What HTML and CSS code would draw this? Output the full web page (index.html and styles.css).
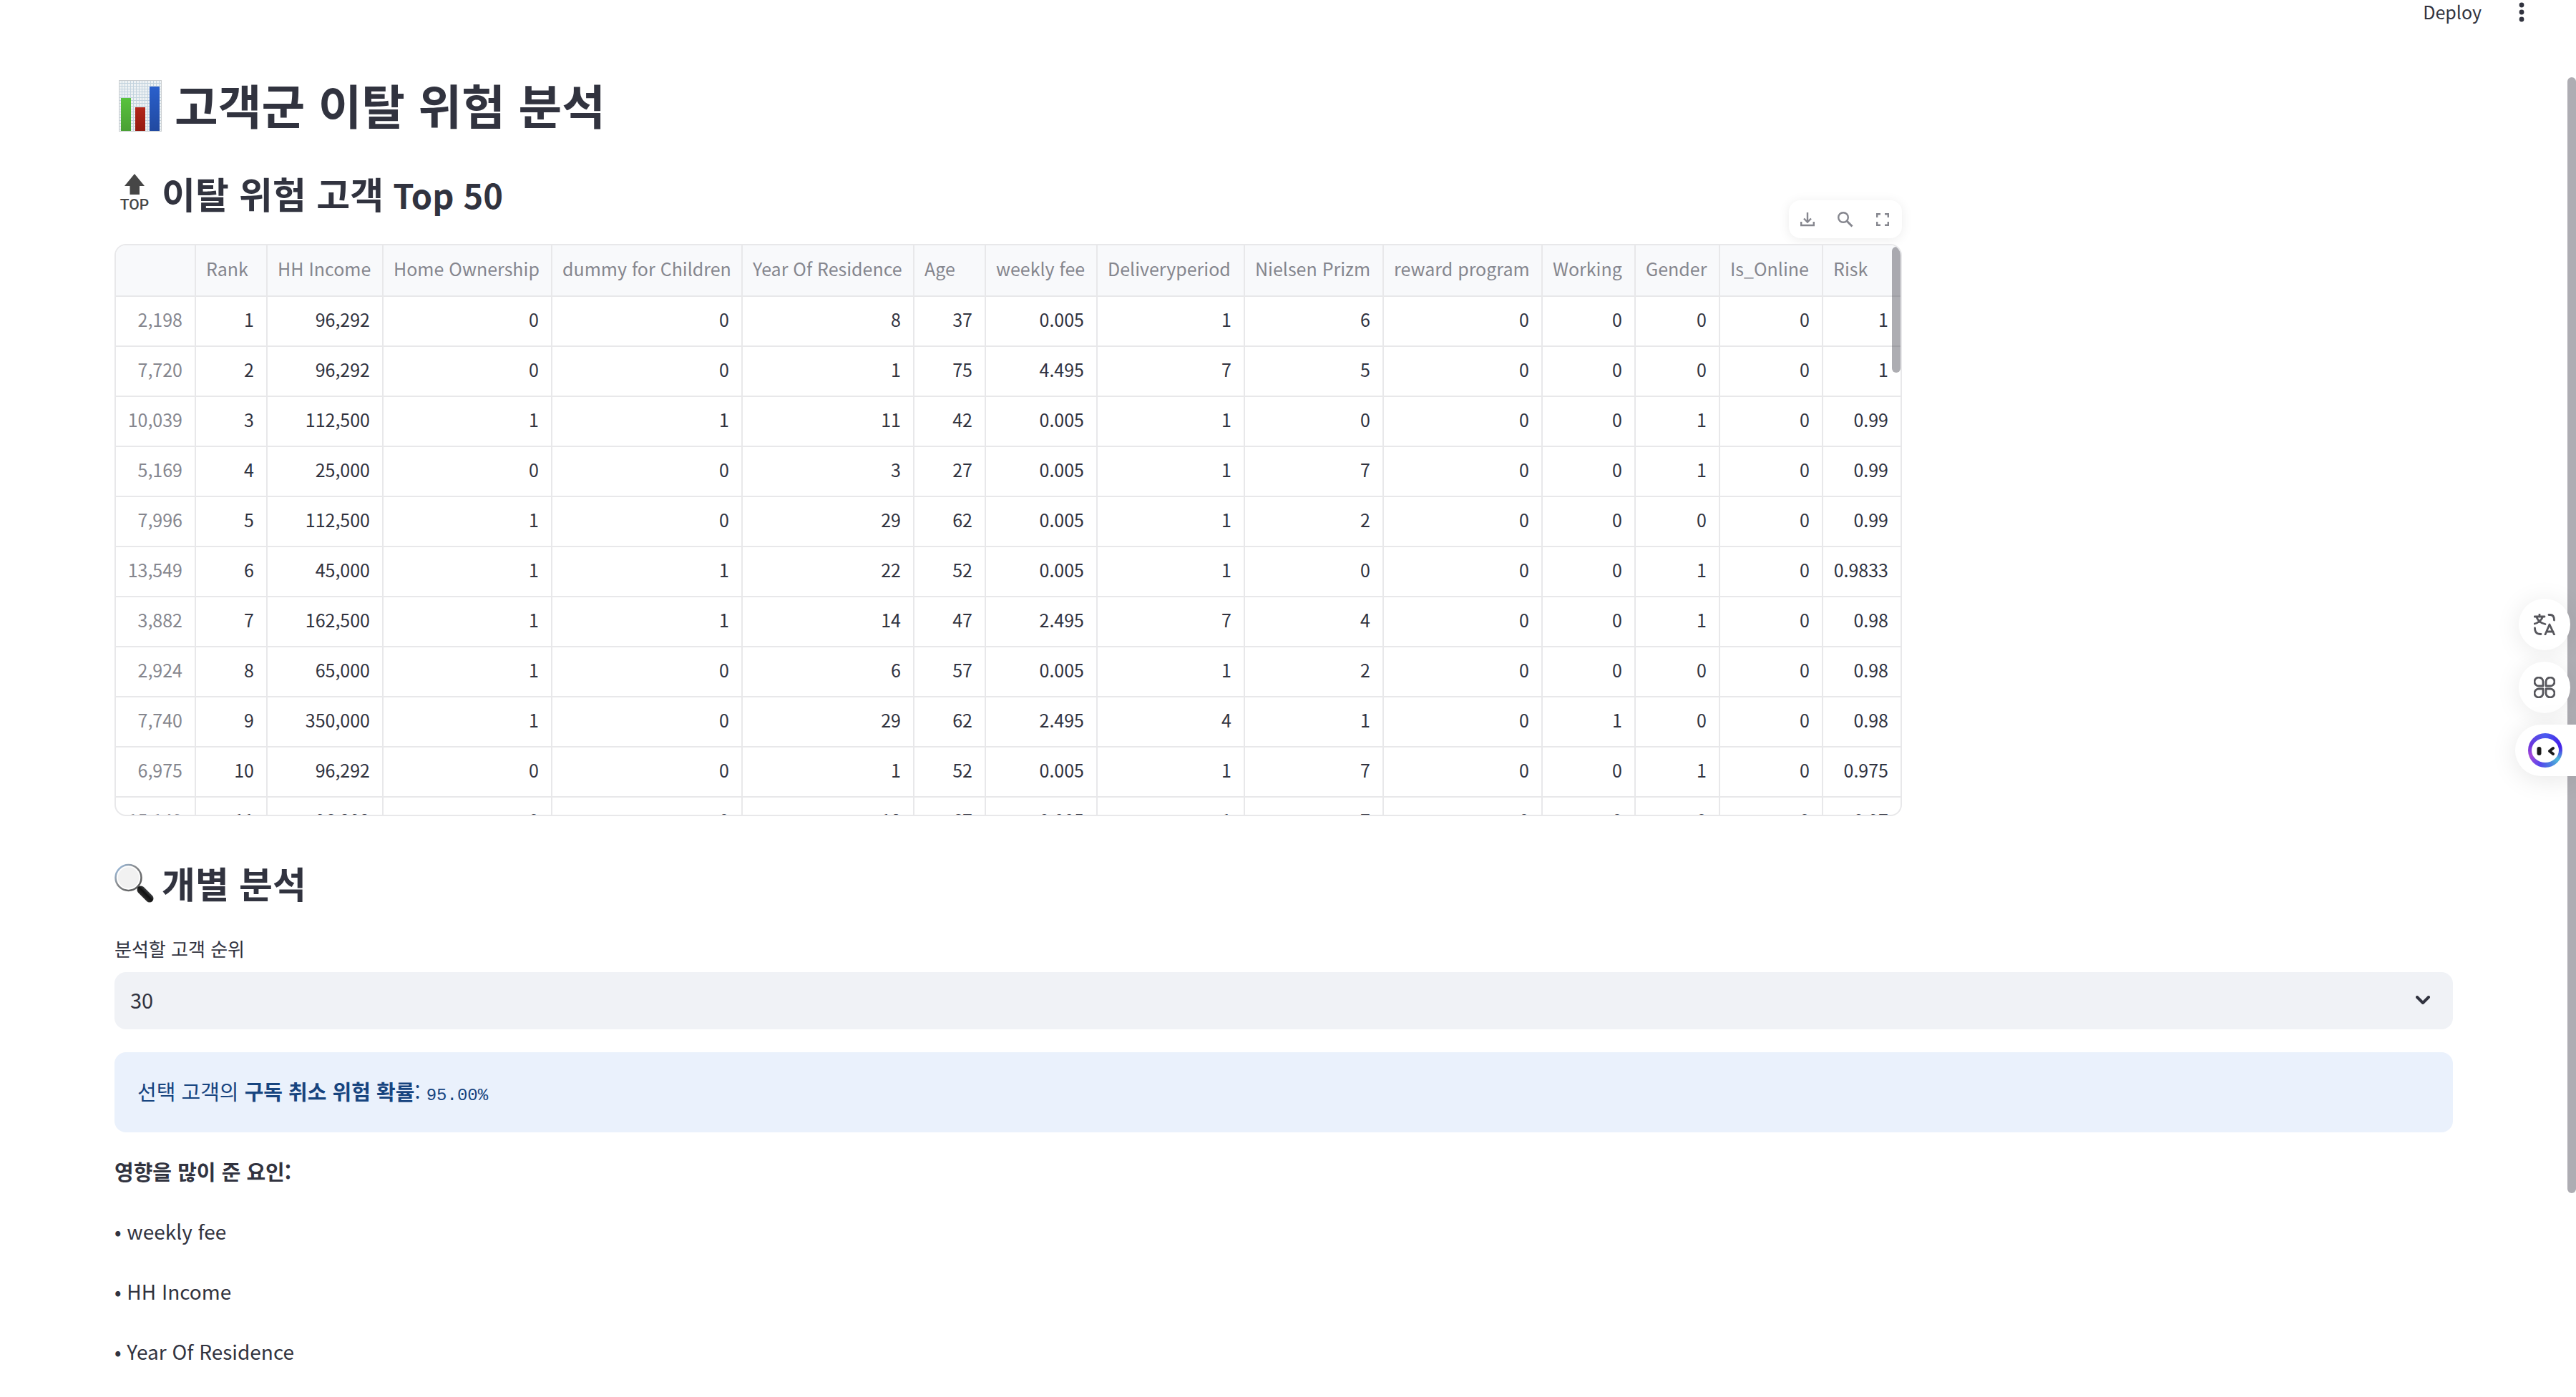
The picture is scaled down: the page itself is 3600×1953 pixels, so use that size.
FILE: index.html
```html
<!DOCTYPE html>
<html lang="ko">
<head>
<meta charset="utf-8">
<title>고객군 이탈 위험 분석</title>
<link rel="stylesheet" href="styles.css">
</head>
<body>
<header class="topbar">
  <button class="deploy" type="button">Deploy</button>
  <button class="more" type="button" aria-label="메뉴">
    <svg width="8" height="28" viewBox="0 0 8 28"><circle cx="4" cy="4" r="3.4"/><circle cx="4" cy="14" r="3.4"/><circle cx="4" cy="24" r="3.4"/></svg>
  </button>
</header>

<main class="page">
  <h1 class="title">
    <svg class="title-icon" viewBox="0 0 60 72" aria-hidden="true">
      <defs>
        <pattern id="grid" width="4" height="4" patternUnits="userSpaceOnUse"><rect width="4" height="4" fill="#eef2f4"/><path d="M0 .5H4M.5 0V4" stroke="#c3d3de" stroke-width="1"/></pattern>
        <linearGradient id="g1" x1="0" y1="0" x2="0" y2="1"><stop offset="0" stop-color="#58c23c"/><stop offset="1" stop-color="#4aa035"/></linearGradient>
        <linearGradient id="g2" x1="0" y1="0" x2="0" y2="1"><stop offset="0" stop-color="#b3261a"/><stop offset="1" stop-color="#941a10"/></linearGradient>
        <linearGradient id="g3" x1="0" y1="0" x2="0" y2="1"><stop offset="0" stop-color="#2a60cc"/><stop offset="1" stop-color="#2149a0"/></linearGradient>
      </defs>
      <rect width="60" height="72" fill="url(#grid)"/>
      <rect x=".5" y=".5" width="59" height="71" fill="none" stroke="#c9cdd0"/>
      <rect x="3" y="25" width="14" height="46" fill="url(#g1)"/>
      <rect x="23" y="38" width="14" height="33" fill="url(#g2)"/>
      <rect x="43" y="9" width="14" height="62" fill="url(#g3)"/>
    </svg>
    <span class="title-text">고객군 이탈 위험 분석</span>
  </h1>

  <h2 class="subtitle">
    <span class="top-icon" aria-hidden="true"><svg width="28" height="29" viewBox="0 0 28 29"><path d="M14 0 28 17H21V29H7.500V17H0Z" fill="#464646"/></svg><span class="top-word">TOP</span></span>
    <span>이탈 위험 고객<span class="subtitle-latin"> Top 50</span></span>
  </h2>

  <section class="frame">
    <div class="tools">
      <button type="button" aria-label="다운로드"><svg width="20" height="20" viewBox="0 0 20 20"><path d="M10 0V13M5 8.500 10 13.500 15 8.500M1.200 13V18H18.800V13"/></svg></button>
      <button type="button" aria-label="검색"><svg width="22" height="22" viewBox="0 0 22 22"><circle cx="8" cy="8" r="6.800"/><path d="M13 13 20.500 20.500" stroke-width="3"/></svg></button>
      <button type="button" aria-label="전체 화면"><svg width="18" height="18" viewBox="0 0 18 18"><path d="M1.200 6V1.200H6M12 1.200H16.800V6M16.800 12V16.800H12M6 16.800H1.200V12"/></svg></button>
    </div>
    <div class="grid-box">
      <table class="grid">
        <colgroup><col class="c0"><col class="c1"><col class="c2"><col class="c3"><col class="c4"><col class="c5"><col class="c6"><col class="c7"><col class="c8"><col class="c9"><col class="c10"><col class="c11"><col class="c12"><col class="c13"><col class="c14"></colgroup>
        <thead><tr><th></th><th>Rank</th><th>HH Income</th><th>Home Ownership</th><th>dummy for Children</th><th>Year Of Residence</th><th>Age</th><th>weekly fee</th><th>Deliveryperiod</th><th>Nielsen Prizm</th><th>reward program</th><th>Working</th><th>Gender</th><th>Is_Online</th><th>Risk</th></tr></thead>
        <tbody>
          <tr><td>2,198</td><td>1</td><td>96,292</td><td>0</td><td>0</td><td>8</td><td>37</td><td>0.005</td><td>1</td><td>6</td><td>0</td><td>0</td><td>0</td><td>0</td><td>1</td></tr>
          <tr><td>7,720</td><td>2</td><td>96,292</td><td>0</td><td>0</td><td>1</td><td>75</td><td>4.495</td><td>7</td><td>5</td><td>0</td><td>0</td><td>0</td><td>0</td><td>1</td></tr>
          <tr><td>10,039</td><td>3</td><td>112,500</td><td>1</td><td>1</td><td>11</td><td>42</td><td>0.005</td><td>1</td><td>0</td><td>0</td><td>0</td><td>1</td><td>0</td><td>0.99</td></tr>
          <tr><td>5,169</td><td>4</td><td>25,000</td><td>0</td><td>0</td><td>3</td><td>27</td><td>0.005</td><td>1</td><td>7</td><td>0</td><td>0</td><td>1</td><td>0</td><td>0.99</td></tr>
          <tr><td>7,996</td><td>5</td><td>112,500</td><td>1</td><td>0</td><td>29</td><td>62</td><td>0.005</td><td>1</td><td>2</td><td>0</td><td>0</td><td>0</td><td>0</td><td>0.99</td></tr>
          <tr><td>13,549</td><td>6</td><td>45,000</td><td>1</td><td>1</td><td>22</td><td>52</td><td>0.005</td><td>1</td><td>0</td><td>0</td><td>0</td><td>1</td><td>0</td><td>0.9833</td></tr>
          <tr><td>3,882</td><td>7</td><td>162,500</td><td>1</td><td>1</td><td>14</td><td>47</td><td>2.495</td><td>7</td><td>4</td><td>0</td><td>0</td><td>1</td><td>0</td><td>0.98</td></tr>
          <tr><td>2,924</td><td>8</td><td>65,000</td><td>1</td><td>0</td><td>6</td><td>57</td><td>0.005</td><td>1</td><td>2</td><td>0</td><td>0</td><td>0</td><td>0</td><td>0.98</td></tr>
          <tr><td>7,740</td><td>9</td><td>350,000</td><td>1</td><td>0</td><td>29</td><td>62</td><td>2.495</td><td>4</td><td>1</td><td>0</td><td>1</td><td>0</td><td>0</td><td>0.98</td></tr>
          <tr><td>6,975</td><td>10</td><td>96,292</td><td>0</td><td>0</td><td>1</td><td>52</td><td>0.005</td><td>1</td><td>7</td><td>0</td><td>0</td><td>1</td><td>0</td><td>0.975</td></tr>
          <tr><td>15,149</td><td>11</td><td>96,292</td><td>0</td><td>0</td><td>18</td><td>67</td><td>0.005</td><td>1</td><td>7</td><td>0</td><td>0</td><td>0</td><td>0</td><td>0.97</td></tr>
        </tbody>
      </table>
      <div class="grid-thumb"></div>
    </div>
  </section>

  <h2 class="subtitle detail">
    <svg class="lens-icon" viewBox="0 0 56 56" aria-hidden="true">
      <defs>
        <linearGradient id="rim" x1="0" y1="0" x2="1" y2="1"><stop offset="0" stop-color="#9cc4ee"/><stop offset=".4" stop-color="#8a8d90"/><stop offset="1" stop-color="#4c4c4c"/></linearGradient>
        <linearGradient id="grip" gradientUnits="userSpaceOnUse" x1="48" y1="38" x2="38" y2="48"><stop offset="0" stop-color="#55595c"/><stop offset=".5" stop-color="#111"/><stop offset="1" stop-color="#333"/></linearGradient>
      </defs>
      <path d="M32 33 37 38" stroke="#777" stroke-width="4"/>
      <circle cx="19.500" cy="21" r="18" fill="#f1f1f1" stroke="url(#rim)" stroke-width="2.500"/>
      <circle cx="19.500" cy="21" r="15.500" fill="none" stroke="#fff" stroke-width="1.500"/>
      <path d="M37 38 49 50" stroke="url(#grip)" stroke-width="11" stroke-linecap="round"/>
    </svg>
    <span>개별 분석</span>
  </h2>

  <form class="picker">
    <label class="picker-label" for="rank">분석할 고객 순위</label>
    <div class="select-box">
      <select id="rank" class="select"><option>30</option></select>
      <svg class="chevron" width="20" height="13" viewBox="0 0 20 13" aria-hidden="true"><path d="M2 2 10 10 18 2"/></svg>
    </div>
  </form>

  <div class="alert"><p>선택 고객의 <strong>구독 취소 위험 확률</strong>: <code>95.00%</code></p></div>

  <div class="factors">
    <p><strong>영향을 많이 준 요인:</strong></p>
    <p class="latin">• weekly fee</p>
    <p class="latin">• HH Income</p>
    <p class="latin">• Year Of Residence</p>
  </div>
</main>

<div class="page-thumb"></div>

<aside class="dock">
  <button class="dock-btn" type="button" aria-label="번역">
    <svg width="30" height="30" viewBox="0 0 30 30"><path d="M1 4H15M8 1V4M12.500 4C11 9 6 13 1 14M4 5C6 10 11 13.500 16 14.500M21 1.500H23C27 1.500 28.500 4 28.500 9M1.500 20C1.500 26 4 28.500 10 28.500M16 29 22 15 28.500 29M18 25H27"/></svg>
  </button>
  <button class="dock-btn" type="button" aria-label="도구">
    <svg width="30" height="30" viewBox="0 0 30 30"><path d="M13 13H7.500A6 6 0 1 1 13 7.500ZM17 13V7.500A6 6 0 1 1 22.500 13ZM13 17V22.500A6 6 0 1 1 7.500 17ZM17 17H22.500A6 6 0 1 1 17 22.500Z"/></svg>
  </button>
  <button class="dock-pill" type="button" aria-label="도우미">
    <span class="bot"><svg width="38" height="34" viewBox="0 0 38 34"><ellipse cx="19" cy="17" rx="19" ry="17" fill="#fff"/><rect x="7.500" y="12" width="6" height="12" rx="3" fill="#1a1a1a"/><path d="M30 14 25 18 30 22" fill="none" stroke="#1a1a1a" stroke-width="4" stroke-linecap="round" stroke-linejoin="round"/></svg></span>
  </button>
</aside>
</body>
</html>
```
FILE: styles.css
```css
* { box-sizing: border-box; }

body {
  margin: 0;
  color: #31333f;
  background: #fff;
  font-family: "Noto Sans CJK KR", sans-serif;
  font-size: 29px;
  line-height: 52px;
}

button {
  padding: 0;
  border: 0;
  background: none;
  color: inherit;
  font-family: inherit;
}

h1, h2, p { margin: 0; }

.topbar {
  display: flex;
  justify-content: flex-end;
  align-items: center;
  gap: 52px;
  height: 34px;
  padding-right: 72px;
}

.deploy { padding-bottom: 2px; font-size: 25px; line-height: 32px; }
.more { display: flex; }
.more svg { fill: #31333f; }

.page { padding: 62px 172px 20px 160px; }

.title {
  display: flex;
  align-items: center;
  gap: 18px;
  height: 104px;
  padding-left: 6px;
  font-size: 66px;
  font-weight: 700;
  line-height: 96px;
}
.title-icon { width: 60px; height: 72px; }
.title-text { padding-bottom: 6px; }

.subtitle {
  display: flex;
  align-items: center;
  gap: 10px;
  height: 64px;
  margin-top: 39px;
  font-size: 51px;
  font-weight: 700;
  line-height: 64px;
}
.subtitle-latin { font-size: 47px; }
.top-icon {
  display: flex;
  flex-direction: column;
  align-items: center;
  width: 56px;
}
.top-word {
  color: #464646;
  font-family: Roboto, sans-serif;
  font-size: 21px;
  font-weight: 500;
  line-height: 28px;
}
.lens-icon { width: 56px; height: 56px; }
.detail { margin-top: 61px; }

.frame {
  position: relative;
  width: 2498px;
  max-width: 100%;
  margin-top: 38px;
}
.tools {
  position: absolute;
  top: -61px;
  right: 0;
  display: flex;
  justify-content: space-between;
  align-items: center;
  width: 158px;
  height: 53px;
  padding: 0 18px 0 16px;
  border-radius: 16px;
  background: #fff;
  box-shadow: 0 2px 16px rgba(0, 0, 0, .08);
}
.tools button { display: flex; }
.tools svg { fill: none; stroke: #85868e; stroke-width: 2.4; }

.grid-box {
  position: relative;
  height: 800px;
  overflow: hidden;
  border: 2px solid #e8e8ea;
  border-radius: 16px;
}
.grid {
  width: 100%;
  table-layout: fixed;
  border-collapse: separate;
  border-spacing: 0;
  font-size: 25px;
  line-height: 36px;
  font-variant-numeric: tabular-nums;
}
.grid th, .grid td {
  padding: 0 17px 6px 14px;
  border-right: 2px solid #e8e8ea;
  border-bottom: 2px solid #e8e8ea;
  white-space: nowrap;
}
.grid th:last-child, .grid td:last-child { border-right: 0; }
.grid th {
  height: 72px;
  background: #f8f9fb;
  color: #85868e;
  font-weight: 400;
  text-align: left;
}
.grid td { height: 70px; text-align: right; }
.grid td:first-child { color: #85868e; }
.c0 { width: 112px; }
.c1 { width: 100px; }
.c2 { width: 162px; }
.c3 { width: 236px; }
.c4 { width: 266px; }
.c5 { width: 240px; }
.c6 { width: 100px; }
.c7 { width: 156px; }
.c8 { width: 206px; }
.c9 { width: 194px; }
.c10 { width: 222px; }
.c11 { width: 130px; }
.c12 { width: 118px; }
.c13 { width: 144px; }
.grid-thumb {
  position: absolute;
  top: 2px;
  right: 0;
  width: 12px;
  height: 176px;
  border-radius: 6px;
  background: rgba(49, 51, 63, .4);
}

.picker { margin-top: 40px; }
.picker-label {
  display: block;
  font-size: 26px;
  line-height: 40px;
}
.select-box {
  position: relative;
  margin-top: 13px;
}
.select {
  display: block;
  width: 100%;
  height: 80px;
  padding: 0 22px 4px;
  border: 0;
  border-radius: 16px;
  background: #f0f2f6;
  color: #31333f;
  font-family: inherit;
  font-size: 29px;
  appearance: none;
}
.chevron {
  position: absolute;
  top: 33px;
  right: 32px;
  fill: none;
  stroke: #31333f;
  stroke-width: 4;
  stroke-linecap: round;
  stroke-linejoin: round;
  pointer-events: none;
}

.alert {
  margin-top: 32px;
  padding: 28px 32px 32px;
  border-radius: 16px;
  background: #eaf1fc;
  color: #17447f;
}
.alert code {
  font-family: "Liberation Mono", monospace;
  font-size: 24px;
  line-height: 24px;
}

.factors {
  display: flex;
  flex-direction: column;
  gap: 32px;
  margin-top: 28px;
}
.latin { font-size: 28px; }

.page-thumb {
  position: fixed;
  top: 108px;
  right: 0;
  width: 12px;
  height: 1560px;
  border-radius: 6px;
  background: #aeadb3;
}

.dock {
  position: fixed;
  top: 837px;
  right: 0;
  display: flex;
  flex-direction: column;
  align-items: flex-end;
  gap: 16px;
}
.dock-btn {
  display: flex;
  justify-content: center;
  align-items: center;
  width: 72px;
  height: 72px;
  margin-right: 8px;
  border-radius: 50%;
  background: #fff;
  box-shadow: 0 4px 36px rgba(0, 0, 0, .09);
}
.dock-btn svg {
  fill: none;
  stroke: #56565c;
  stroke-width: 2.8;
  stroke-linecap: round;
  stroke-linejoin: round;
}
.dock-pill {
  display: flex;
  align-items: center;
  width: 85px;
  height: 72px;
  padding-left: 18px;
  border-radius: 36px 0 0 36px;
  background: #fff;
  box-shadow: 0 4px 36px rgba(0, 0, 0, .1);
}
.bot {
  display: flex;
  justify-content: center;
  align-items: center;
  width: 48px;
  height: 48px;
  border-radius: 50%;
  background: conic-gradient(#4a5cf0, #4526e8 60deg, #4526e8 80deg, #4fb8d8 125deg, #4a7de0 160deg, #5548ec 200deg, #a447d8 250deg, #6a35dc 290deg, #4a5cf0);
}
```
